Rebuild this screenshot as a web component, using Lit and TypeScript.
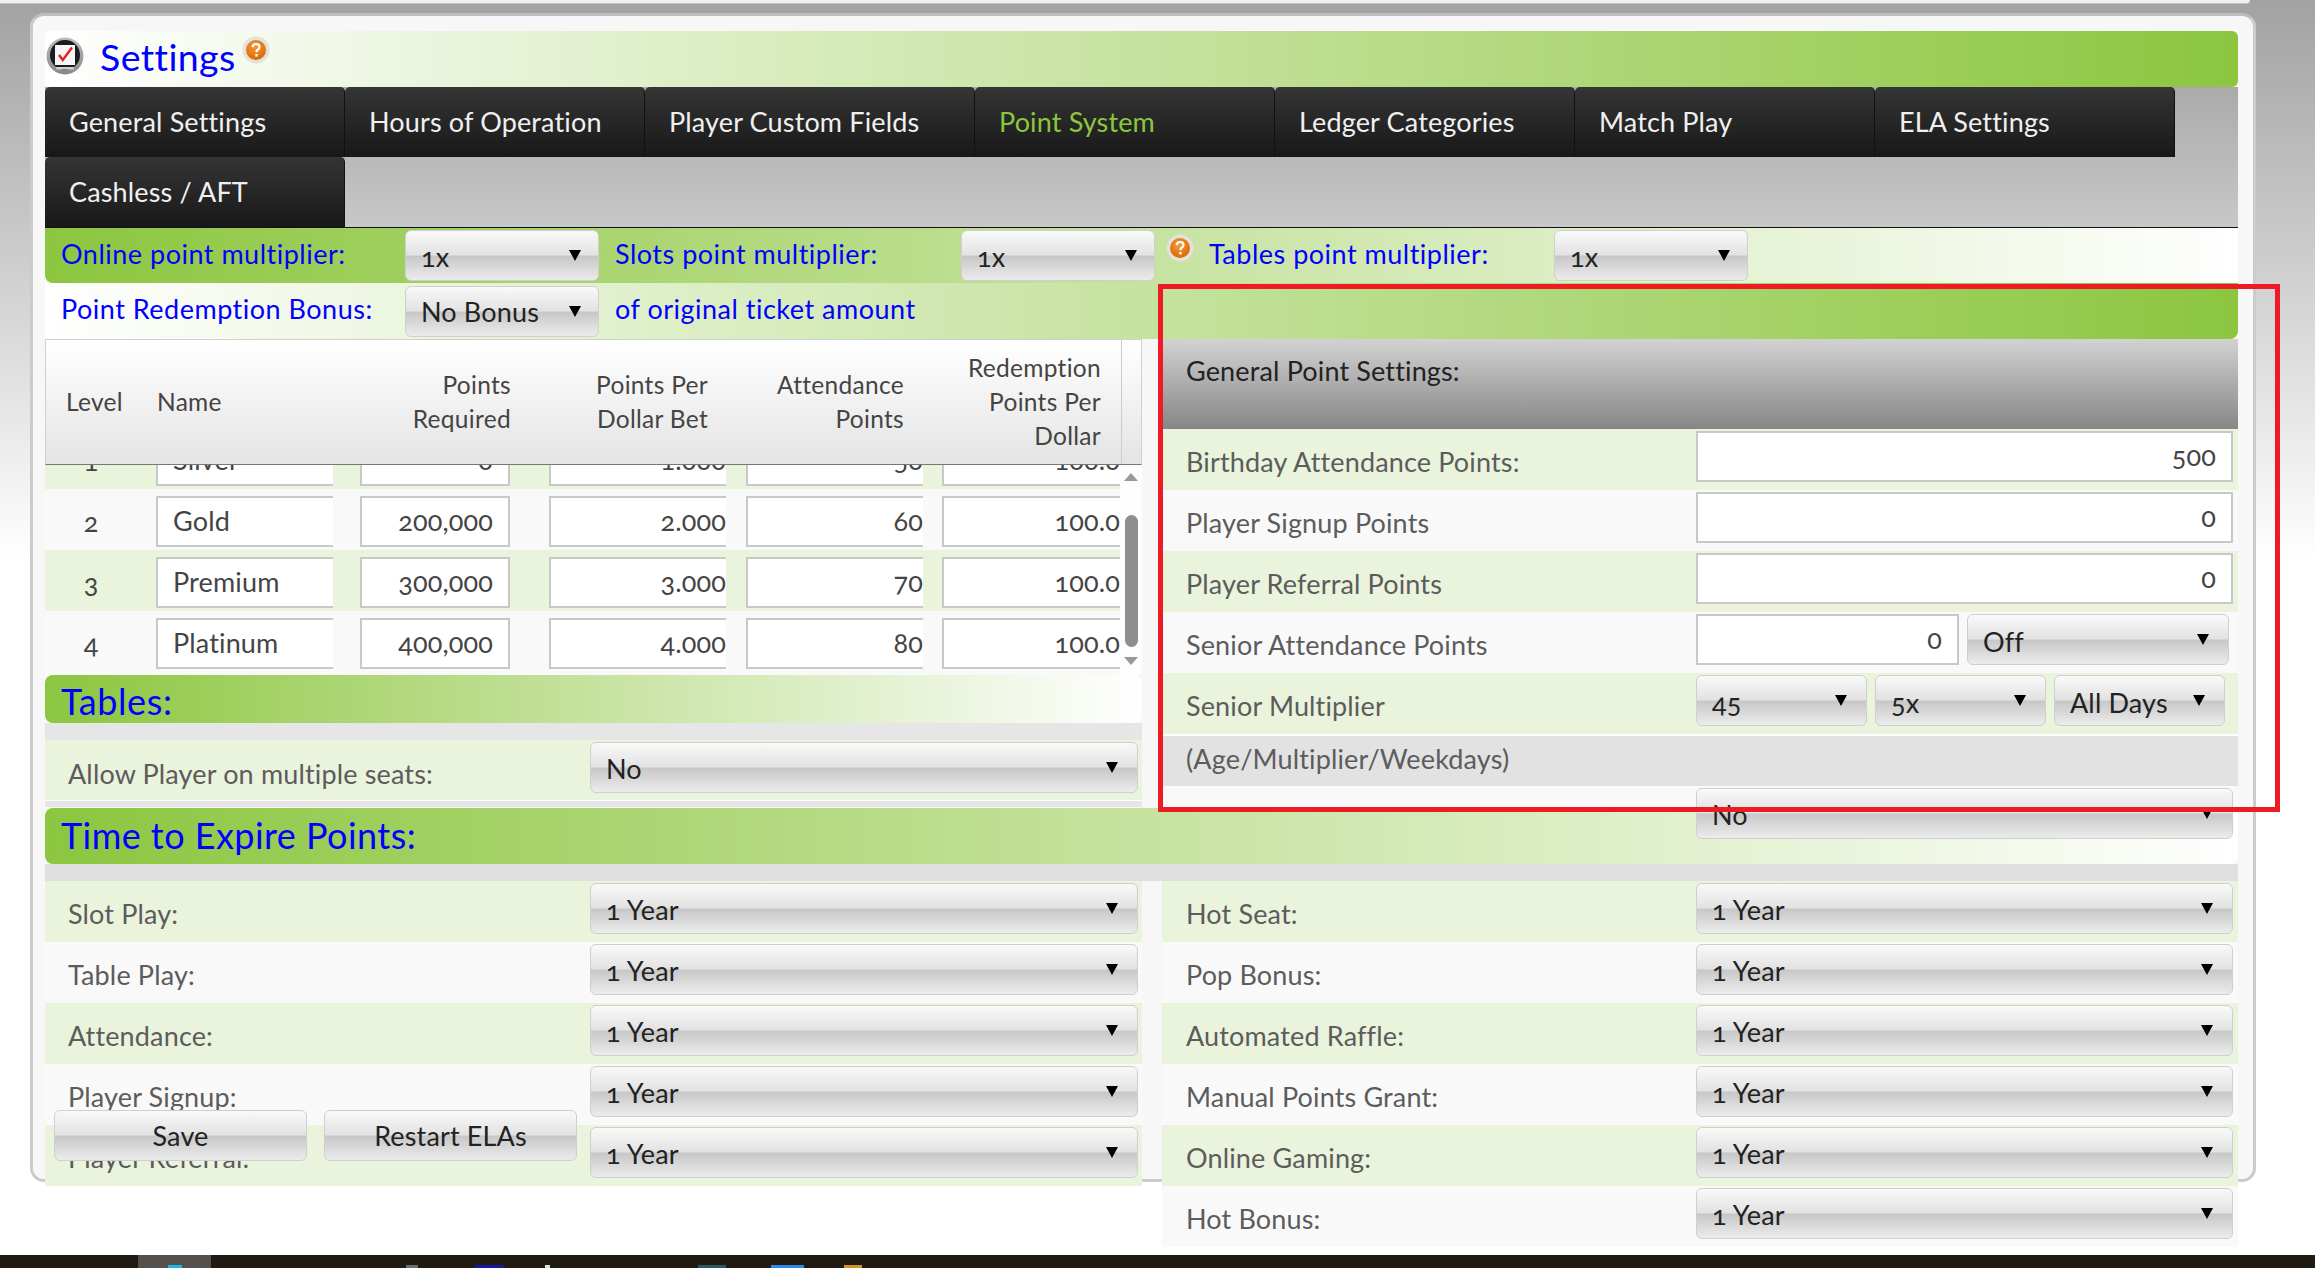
import { LitElement, html, css } from "lit";
import { customElement } from "lit/decorators.js";

const sel = (text: string, cls = "") =>
  html`<div class="sel ${cls}"><span>${text}</span><i class="arrow"></i></div>`;

const helpIcon = (cls: string) => html`<svg class="help ${cls}" viewBox="0 0 28 28">
  <defs><radialGradient id="hg" cx="45%" cy="35%" r="70%"><stop offset="0" stop-color="#f59a3a"/><stop offset="1" stop-color="#d96400"/></radialGradient></defs>
  <circle cx="14" cy="14" r="13.5" fill="#e4e0da"/>
  <circle cx="14" cy="14" r="10" fill="url(#hg)"/>
  <path d="M10.6 11.2c.2-2.2 1.6-3.2 3.5-3.2 2 0 3.400 1.100 3.400 2.900 0 1.300-.7 2-1.700 2.700-.9.6-1.300 1.100-1.300 2.200v.4" fill="none" stroke="#fff" stroke-width="2.200"/>
  <rect x="13.300" y="18" width="2.400" height="2.500" fill="#fff"/>
</svg>`;

const settingsIcon = html`<svg class="logo" viewBox="0 0 38 38">
  <defs><linearGradient id="rg" x1="0" y1="0" x2="0" y2="1"><stop offset="0" stop-color="#bbb"/><stop offset="1" stop-color="#888"/></linearGradient></defs>
  <circle cx="19" cy="19" r="18.500" fill="url(#rg)"/>
  <circle cx="19" cy="18" r="15" fill="#1c1c20"/>
  <rect x="9" y="8" width="20" height="20" fill="#f6f6f6"/>
  <path d="M13 18l3.800 5L26 10.500" fill="none" stroke="#e5202a" stroke-width="2.400"/>
  <rect x="10" y="30" width="18" height="2.500" rx="1" fill="#d0d0d0"/>
</svg>`;

const levels = [
  ["1", "Silver", "0", "1.000", "50", "100.0"],
  ["2", "Gold", "200,000", "2.000", "60", "100.0"],
  ["3", "Premium", "300,000", "3.000", "70", "100.0"],
  ["4", "Platinum", "400,000", "4.000", "80", "100.0"],
];

const tabs = ["General Settings", "Hours of Operation", "Player Custom Fields", "Point System", "Ledger Categories", "Match Play", "ELA Settings", "Cashless / AFT"];
const leftExpire = ["Slot Play:", "Table Play:", "Attendance:", "Player Signup:", "Player Referral:"];
const rightExpire = ["Hot Seat:", "Pop Bonus:", "Automated Raffle:", "Manual Points Grant:", "Online Gaming:", "Hot Bonus:"];

const trayIcons = [
  { gap: 67, w: 14, c: "#19b5e6" },
  { gap: 224, w: 12, c: "#6d6d6d" },
  { gap: 56, w: 30, c: "#16169c" },
  { gap: 41, w: 5, c: "#e0e0e0" },
  { gap: 148, w: 28, c: "#2c5a60" },
  { gap: 45, w: 33, c: "#2a8ae8" },
  { gap: 40, w: 18, c: "#d0902c" },
];

@customElement("app-root")
export class AppRoot extends LitElement {
  static styles = css`
    :host {
      display: flex;
      flex-direction: column;
      position: relative;
      width: 2315px;
      height: 1268px;
      overflow: hidden;
      box-sizing: border-box;
      background: linear-gradient(#a2a2a2 0, #fff 560px);
      font-family: "Lato", "Open Sans", sans-serif;
      font-size: 27px;
      letter-spacing: 0.15px;
      color: #5c5c5c;
      font-variant-numeric: oldstyle-nums;
    }
    * { box-sizing: border-box; }
    .prev {
      flex: none;
      width: 2250px;
      height: 4px;
      background: #efefef;
      border-bottom: 1px solid #c4c4c4;
      border-radius: 0 0 6px 0;
    }
    .card {
      flex: none;
      position: relative;
      margin: 9px 0 0 30px;
      width: 2226px;
      height: 1169px;
      padding: 15px 15px 0 12px;
      background: #f7f7f7;
      border: 3px solid #cbcbcb;
      border-top-color: #bdbdbd;
      border-radius: 14px;
    }
    .title {
      height: 56px;
      display: flex;
      align-items: center;
      background: linear-gradient(90deg, #fff, #8cc63f);
      border-radius: 6px 6px 6px 0;
      padding-left: 1px;
      color: #0000ff;
      font-size: 37.5px;
      letter-spacing: 0.4px;
    }
    .logo { width: 38px; height: 38px; flex: none; margin-top: -6px; }
    .title .name { margin: -5px 0 0 16px; }
    .help { width: 28px; height: 28px; flex: none; }
    .help.t { margin: -18px 0 0 6px; }
    .help.m { margin: -16px 0 0 11px; }
    .tabs {
      height: 141px;
      display: flex;
      flex-wrap: wrap;
      align-content: flex-start;
      background: linear-gradient(#aaa, #c8c8c8);
      border-bottom: 1px solid #111;
    }
    .tab {
      width: 300px;
      height: 70px;
      display: flex;
      align-items: center;
      padding: 0 0 2px 24px;
      background: linear-gradient(#353535, #181818);
      color: #f0f0f0;
      border-radius: 5px 5px 0 0;
      border-right: 1px solid #111;
    }
    .tab.wide { width: 330px; }
    .tab.on { color: #8cc63f; }
    .row1, .row2 {
      display: flex;
      align-items: center;
      padding-left: 16px;
      color: #0000ff;
    }
    .row1 { height: 55px; background: linear-gradient(90deg, #8cc63f, #fff); border-radius: 0 0 0 8px; }
    .row2 { height: 56px; background: linear-gradient(90deg, #fff, #8cc63f); border-radius: 0 0 8px 0; }
    .row1 > span, .row2 > span { letter-spacing: 0.5px; }
    .row1 .lbl, .row2 .lbl { width: 344px; flex: none; margin-top: -4px; }
    .row2 .lbl { margin-top: -6px; }
    .row1 .lbl.b { width: 346px; margin-left: 16px; }
    .row1 .lbl.c { width: 345px; margin-left: 15px; }
    .row2 .after { margin: -6px 0 0 16px; }
    .sel {
      position: relative;
      height: 51px;
      flex: none;
      display: flex;
      align-items: center;
      padding: 3px 0 0 15px;
      color: #222;
      border: 1px solid #cfcfcf;
      border-radius: 6px;
      background: linear-gradient(#f9f9f9 0, #e2e2e2 49%, #c7c7c7 51%, #ececec 100%);
    }
    .arrow {
      position: absolute;
      right: 19px;
      top: 19px;
      width: 0;
      height: 0;
      border-left: 6px solid transparent;
      border-right: 6px solid transparent;
      border-top: 11px solid #000;
    }
    .w194 { width: 194px; padding-top: 1px; }
    .w194 .arrow { right: 17px; }
    .wfull { width: 537px; padding-top: 1px; }
    .wleft { width: 548px; padding-top: 1px; }
    .split {
      height: 469px;
      display: grid;
      grid-template-columns: 1097px 1076px;
      column-gap: 20px;
    }
    .thead {
      height: 126px;
      display: grid;
      grid-template-columns: 111px 204px 189px 197px 196px 178px 22px;
      align-items: center;
      border: 1px solid #d0d0d0;
      border-bottom: 1px solid #777;
      background: linear-gradient(#fff, #e4e4e4);
      font-size: 24.5px;
      line-height: 34px;
      color: #444;
      letter-spacing: 0.3px;
    }
    .thead > div { text-align: right; padding-right: 39px; }
    .thead > .l1 { text-align: left; padding: 0 0 0 20px; }
    .thead > .l2 { text-align: left; padding: 0; }
    .thead > .rd { padding-right: 20px; }
    .thead > .sb { height: 100%; padding: 0; border-left: 1px solid #ccc; }
    .tbody {
      height: 210px;
      display: flex;
      overflow: hidden;
      background: #f9f9f9;
    }
    .rows { width: 1075px; flex: none; margin-top: -37px; }
    .lrow {
      height: 61px;
      display: grid;
      grid-template-columns: 111px 204px 189px 197px 196px 178px;
      align-items: center;
      padding-top: 4px;
      overflow: hidden;
    }
    .lrow:nth-child(odd) { background: #eaf3dc; }
    .lvl { text-align: center; padding: 0 19px 0 0; color: #444; }
    .inp {
      height: 51px;
      display: flex;
      align-items: center;
      justify-content: flex-end;
      background: #fff;
      border: 2px solid #c8c8c8;
      padding: 0 15px 3px;
      color: #444;
    }
    .inp.txt { justify-content: flex-start; width: 177px; border-right: 0; }
    .inp.pts { width: 150px; }
    .inp.num { width: 177px; padding-right: 0; border-right: 0; }
    .inp.last { width: 178px; }
    .scroll {
      flex: 1;
      display: flex;
      flex-direction: column;
      align-items: center;
      background: #fdfdfd;
      padding-top: 8px;
    }
    .scroll .up, .scroll .dn {
      width: 0;
      height: 0;
      border-left: 7px solid transparent;
      border-right: 7px solid transparent;
    }
    .scroll .up { border-bottom: 8px solid #999; }
    .scroll .dn { border-top: 8px solid #999; margin-top: 10px; }
    .scroll .thumb { width: 13px; height: 132px; margin-top: 34px; border-radius: 7px; background: #8e8e8e; }
    .secTables {
      height: 48px;
      display: flex;
      align-items: center;
      padding: 3px 0 0 16px;
      font-size: 36px;
      letter-spacing: 0.6px;
      color: #0000ff;
      background: linear-gradient(90deg, #8cc63f, #fff);
      border-radius: 8px;
    }
    .band { background: #e6e6e6; }
    .band.a { height: 17px; }
    .band.b { height: 7px; border-top: 1px solid #fff; }
    .band.c { height: 17px; background: #e0e0e0; }
    .frow {
      height: 61px;
      display: flex;
      align-items: flex-start;
      justify-content: space-between;
      background: #f9f9f9;
      padding: 2px 5px 0 24px;
    }
    .frow:nth-child(odd) { background: #eaf3dc; }
    .frow .name { margin-top: 14px; }
    .lft { padding: 2px 4px 0 23px; }
    .tablerow { height: 60px; background: #eaf3dc; }
    .tablerow .name { margin-top: 15px; }
    .right { position: relative; z-index: 1; }
    .gp {
      height: 90px;
      padding: 15px 0 0 24px;
      background: linear-gradient(#d2d2d2, #868686);
      color: #222;
    }
    .ctrls { display: flex; width: 537px; justify-content: space-between; flex: none; }
    .frow .inp.full { width: 537px; }
    .frow .inp.half { width: 263px; }
    .sel.off { width: 262px; margin-right: 4px; }
    .sel.m1 { width: 171px; }
    .sel.m2 { width: 171px; }
    .sel.m3 { width: 171px; margin-right: 8px; }
    .age {
      height: 52px;
      display: flex;
      align-items: center;
      padding: 0 0 5px 24px;
      background: #e2e2e2;
      border-top: 2px solid #fff;
    }
    .frow.tail { height: 22px; background: #f9f9f9; }
    .secTime {
      height: 56px;
      display: flex;
      align-items: center;
      padding: 0 0 3px 16px;
      font-size: 36px;
      letter-spacing: 0.45px;
      color: #0000ff;
      background: linear-gradient(90deg, #8cc63f, #fff);
      border-radius: 8px;
    }
    .expire {
      display: grid;
      grid-template-columns: 1097px 1076px;
      column-gap: 20px;
      align-items: start;
    }
    .actions {
      position: absolute;
      left: 21px;
      top: 1094px;
      display: flex;
      gap: 17px;
    }
    .btn {
      width: 253px;
      height: 51px;
      display: flex;
      align-items: center;
      justify-content: center;
      color: #222;
      border: 1px solid #cfcfcf;
      border-radius: 6px;
      background: linear-gradient(#f9f9f9 0, #e2e2e2 49%, #c7c7c7 51%, #ececec 100%);
    }
    .spacer { flex: 1; }
    .taskbar {
      flex: none;
      height: 13px;
      display: flex;
      align-items: flex-end;
      background: #211a12;
      position: relative;
    }
    .task-on { width: 73px; height: 13px; background: #55504c; position: absolute; left: 138px; top: 0; }
    .tray { display: flex; align-items: flex-end; margin-left: 101px; position: relative; }
    .tray i { display: block; height: 3px; }
    .redbox {
      position: absolute;
      left: 1158px;
      top: 284px;
      width: 1122px;
      height: 528px;
      border: 5px solid #ed1c24;
      z-index: 5;
      pointer-events: none;
    }
  `;

  render() {
    return html`
      <div class="prev"></div>
      <div class="card">
        <div class="title">${settingsIcon}<span class="name">Settings</span>${helpIcon("t")}</div>
        <div class="tabs">
          ${tabs.map((t, i) => html`<div class="tab ${i === 2 ? "wide" : ""} ${i === 3 ? "on" : ""}">${t}</div>`)}
        </div>
        <div class="row1">
          <span class="lbl">Online point multiplier:</span>${sel("1x", "w194")}
          <span class="lbl b">Slots point multiplier:</span>${sel("1x", "w194")}
          ${helpIcon("m")}
          <span class="lbl c">Tables point multiplier:</span>${sel("1x", "w194")}
        </div>
        <div class="row2">
          <span class="lbl">Point Redemption Bonus:</span>${sel("No Bonus", "w194")}
          <span class="after">of original ticket amount</span>
        </div>
        <div class="split">
          <div class="left">
            <div class="thead">
              <div class="l1">Level</div>
              <div class="l2">Name</div>
              <div>Points<br />Required</div>
              <div>Points Per<br />Dollar Bet</div>
              <div>Attendance<br />Points</div>
              <div class="rd">Redemption<br />Points Per<br />Dollar</div>
              <div class="sb"></div>
            </div>
            <div class="tbody">
              <div class="rows">
                ${levels.map((r) => html`<div class="lrow">
                  <div class="lvl">${r[0]}</div>
                  <div class="inp txt">${r[1]}</div>
                  <div class="inp pts">${r[2]}</div>
                  <div class="inp num">${r[3]}</div>
                  <div class="inp num">${r[4]}</div>
                  <div class="inp num last">${r[5]}</div>
                </div>`)}
              </div>
              <div class="scroll"><i class="up"></i><i class="thumb"></i><i class="dn"></i></div>
            </div>
            <div class="secTables">Tables:</div>
            <div class="band a"></div>
            <div class="frow lft tablerow"><span class="name">Allow Player on multiple seats:</span>${sel("No", "wleft")}</div>
            <div class="band b"></div>
          </div>
          <div class="right">
            <div class="gp">General Point Settings:</div>
            <div>
              <div class="frow"><span class="name">Birthday Attendance Points:</span><div class="inp full">500</div></div>
              <div class="frow"><span class="name">Player Signup Points</span><div class="inp full">0</div></div>
              <div class="frow"><span class="name">Player Referral Points</span><div class="inp full">0</div></div>
              <div class="frow"><span class="name">Senior Attendance Points</span>
                <div class="ctrls"><div class="inp half">0</div>${sel("Off", "off")}</div></div>
              <div class="frow"><span class="name">Senior Multiplier</span>
                <div class="ctrls">${sel("45", "m1")}${sel("5x", "m2")}${sel("All Days", "m3")}</div></div>
            </div>
            <div class="age">(Age/Multiplier/Weekdays)</div>
            <div class="frow tail"><span></span>${sel("No", "wfull")}</div>
          </div>
        </div>
        <div class="secTime">Time to Expire Points:</div>
        <div class="band c"></div>
        <div class="expire">
          <div>${leftExpire.map((n) => html`<div class="frow lft"><span class="name">${n}</span>${sel("1 Year", "wleft")}</div>`)}</div>
          <div>${rightExpire.map((n) => html`<div class="frow"><span class="name">${n}</span>${sel("1 Year", "wfull")}</div>`)}</div>
        </div>
        <div class="actions"><div class="btn">Save</div><div class="btn">Restart ELAs</div></div>
      </div>
      <div class="spacer"></div>
      <div class="taskbar">
        <div class="task-on"></div>
        <div class="tray">
          ${trayIcons.map((t) => html`<i style="margin-left:${t.gap}px;width:${t.w}px;background:${t.c}"></i>`)}
        </div>
      </div>
      <div class="redbox"></div>
    `;
  }
}
